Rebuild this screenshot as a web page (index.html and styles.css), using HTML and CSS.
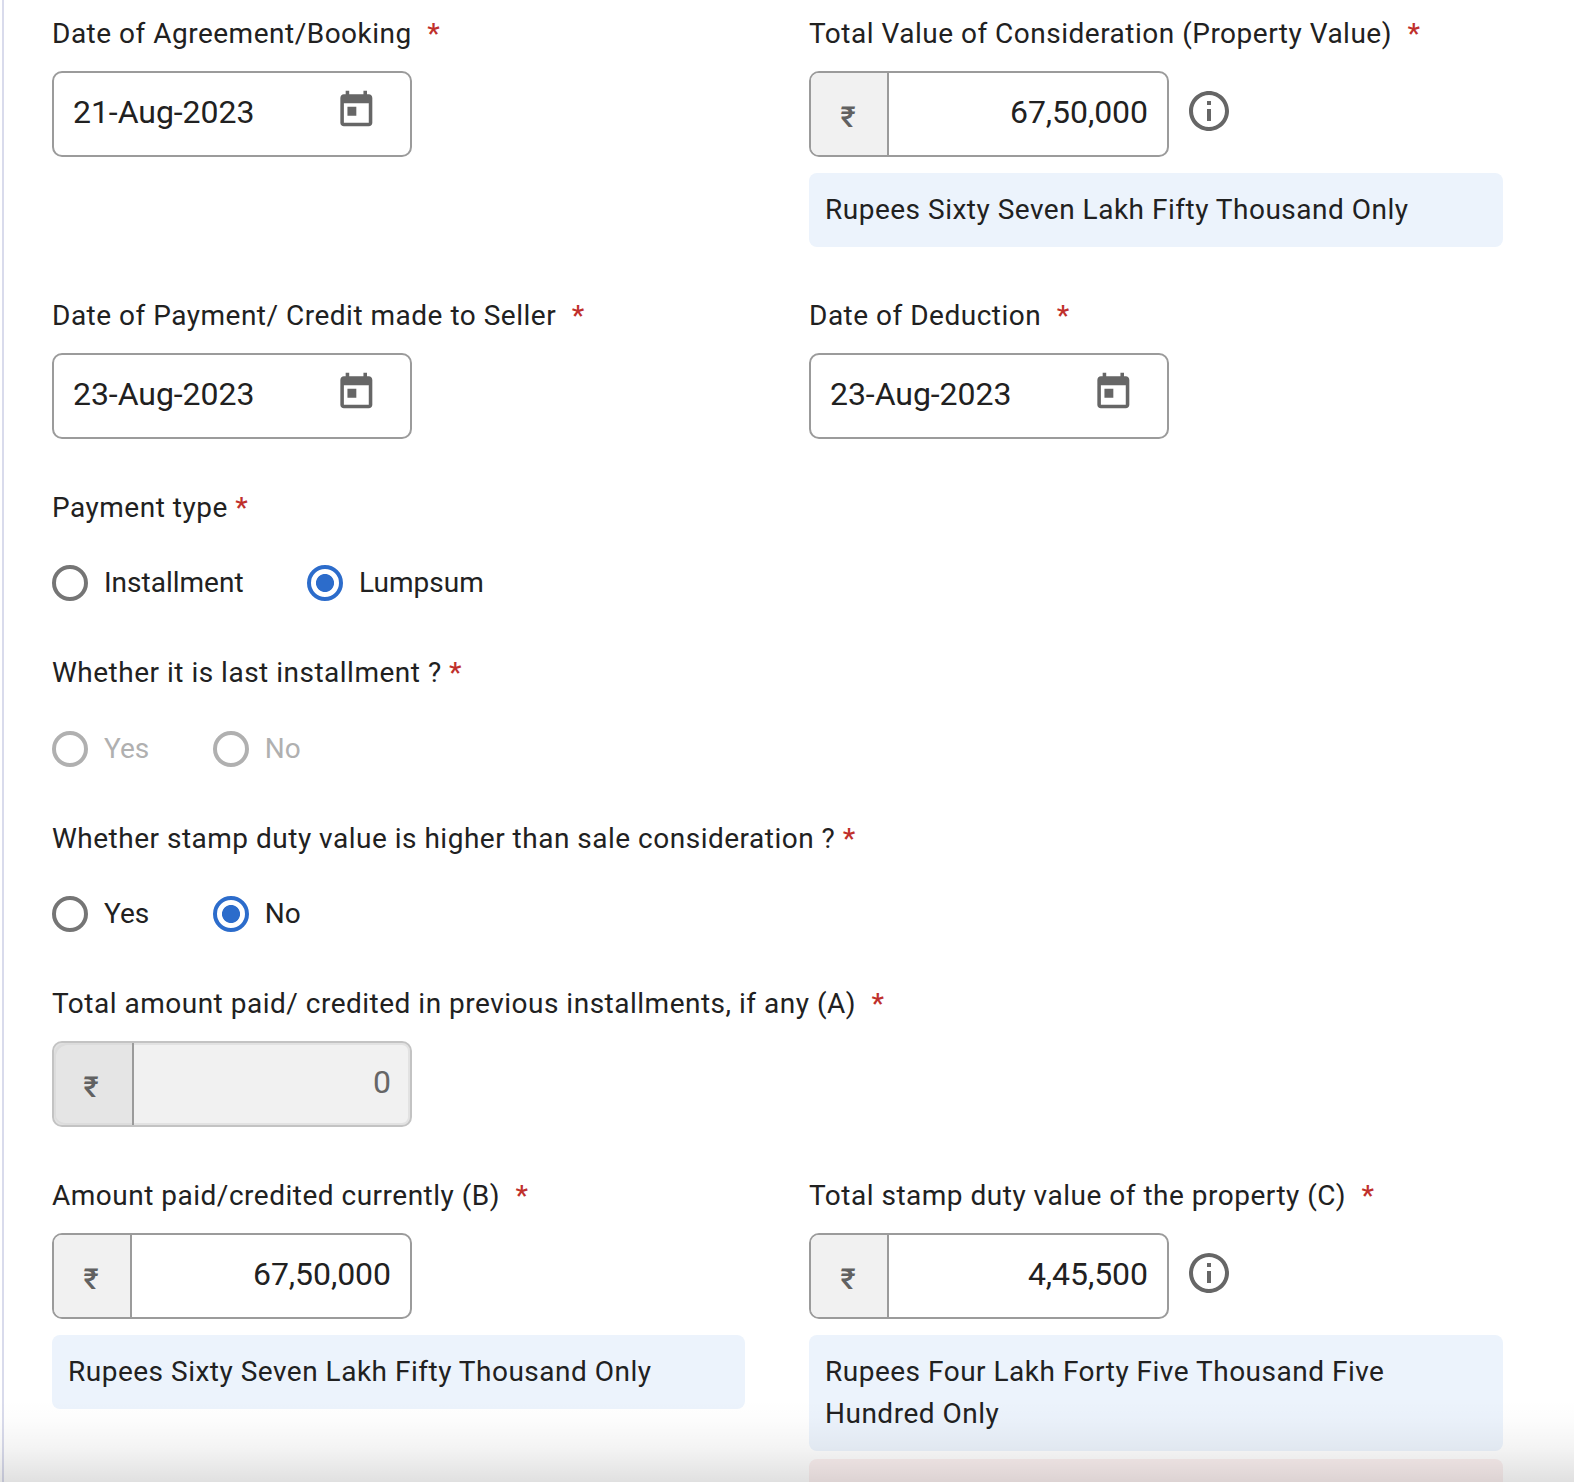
FILE: index.html
```html
<!DOCTYPE html>
<html lang="en">
<head>
<meta charset="utf-8">
<title>Property details</title>
<link rel="stylesheet" href="styles.css">
</head>
<body>
<svg class="sprite" aria-hidden="true">
  <symbol id="calendar" viewBox="0 0 24 24"><path d="M19 3h-1V1h-2v2H8V1H6v2H5c-1.11 0-1.99.9-1.99 2L3 19c0 1.1.89 2 2 2h14c1.1 0 2-.9 2-2V5c0-1.1-.9-2-2-2zm0 16H5V8h14v11zM7 10h5v5H7z"/></symbol>
  <symbol id="info" viewBox="0 0 24 24"><path d="M11 7h2v2h-2zm0 4h2v6h-2zm1-9C6.48 2 2 6.48 2 12s4.48 10 10 10 10-4.48 10-10S17.52 2 12 2zm0 18c-4.41 0-8-3.59-8-8s3.59-8 8-8 8 3.59 8 8-3.59 8-8 8z"/></symbol>
</svg>
<form class="form">
  <div class="row">
    <div class="field">
      <div class="label">Date of Agreement/Booking<span class="req spaced">*</span></div>
      <div class="box date"><span class="value">21-Aug-2023</span><svg class="calendar"><use href="#calendar"/></svg></div>
    </div>
    <div class="field">
      <div class="label">Total Value of Consideration (Property Value)<span class="req spaced">*</span></div>
      <div class="line">
        <div class="box amount"><span class="prefix">₹</span><span class="value">67,50,000</span></div>
        <svg class="info"><use href="#info"/></svg>
      </div>
      <div class="hint">Rupees Sixty Seven Lakh Fifty Thousand Only</div>
    </div>
  </div>
  <div class="row">
    <div class="field">
      <div class="label">Date of Payment/ Credit made to Seller<span class="req spaced">*</span></div>
      <div class="box date"><span class="value">23-Aug-2023</span><svg class="calendar"><use href="#calendar"/></svg></div>
    </div>
    <div class="field">
      <div class="label">Date of Deduction<span class="req spaced">*</span></div>
      <div class="box date"><span class="value">23-Aug-2023</span><svg class="calendar"><use href="#calendar"/></svg></div>
    </div>
  </div>
  <div class="choice">
    <div class="label">Payment type <span class="req">*</span></div>
    <div class="options">
      <label class="option"><span class="radio"></span>Installment</label>
      <label class="option"><span class="radio checked"></span>Lumpsum</label>
    </div>
  </div>
  <div class="choice">
    <div class="label">Whether it is last installment ? <span class="req">*</span></div>
    <div class="options disabled">
      <label class="option"><span class="radio"></span>Yes</label>
      <label class="option"><span class="radio"></span>No</label>
    </div>
  </div>
  <div class="choice">
    <div class="label">Whether stamp duty value is higher than sale consideration ? <span class="req">*</span></div>
    <div class="options">
      <label class="option"><span class="radio"></span>Yes</label>
      <label class="option"><span class="radio checked"></span>No</label>
    </div>
  </div>
  <div class="field">
    <div class="label">Total amount paid/ credited in previous installments, if any (A)<span class="req spaced">*</span></div>
    <div class="box amount readonly"><span class="prefix">₹</span><span class="value">0</span></div>
  </div>
  <div class="row">
    <div class="field">
      <div class="label">Amount paid/credited currently (B)<span class="req spaced">*</span></div>
      <div class="box amount"><span class="prefix">₹</span><span class="value">67,50,000</span></div>
      <div class="hint">Rupees Sixty Seven Lakh Fifty Thousand Only</div>
    </div>
    <div class="field">
      <div class="label">Total stamp duty value of the property (C)<span class="req spaced">*</span></div>
      <div class="line">
        <div class="box amount"><span class="prefix">₹</span><span class="value">4,45,500</span></div>
        <svg class="info"><use href="#info"/></svg>
      </div>
      <div class="hint">Rupees Four Lakh Forty Five Thousand Five Hundred Only</div>
      <div class="alert"></div>
    </div>
  </div>
</form>
<div class="fade"></div>
</body>
</html>
```

FILE: styles.css
```css
* { box-sizing: border-box; }

body {
  margin: 0;
  height: 1482px;
  overflow: hidden;
  background: #fff;
  color: #212121;
  font: 28px/42px Roboto, "Liberation Sans", sans-serif;
  letter-spacing: 0.5px;
}

.sprite { display: none; }

.form {
  display: flex;
  flex-direction: column;
  gap: 48px;
  height: 1482px;
  margin-left: 2px;
  padding: 13px 71px 0 48px;
  border-left: 2px solid #d9dbec;
  overflow: hidden;
}

.form > * { flex-shrink: 0; }

.row {
  display: grid;
  grid-template-columns: 693px 694px;
  column-gap: 64px;
}

.label { margin-bottom: 16px; white-space: nowrap; }

.req { color: #c0302c; font-weight: 500; }
.req.spaced { margin-left: 15.5px; }

.line { display: flex; gap: 16.4px; }

.box {
  display: flex;
  width: 360px;
  height: 86px;
  border: 2px solid #9b9b9b;
  border-radius: 10px;
  overflow: hidden;
}

.value {
  flex: 1;
  padding: 17px 19px 0;
  font-size: 32px;
  line-height: 44px;
  letter-spacing: -0.05px;
}

.calendar {
  width: 42.67px;
  height: 42.67px;
  margin: 16px 32.8px 0 0;
  fill: #666;
}

.amount .value { text-align: right; }

.prefix {
  width: 78px;
  padding: 23px 2px 0 0;
  border-right: 2px solid #9b9b9b;
  background: #f1f1f1;
  color: #616161;
  font-size: 29px;
  font-weight: 500;
  text-align: center;
  letter-spacing: 0;
}

.readonly {
  border-color: #c3c3c3;
  background: #f1f1f1;
  box-shadow: inset 0 0 0 2px #e2e2e2;
}
.readonly .value { color: #666; }
.readonly .prefix {
  width: 80px;
  padding-right: 4px;
  border-radius: 12px 0 0 12px;
  background: #e5e5e5;
  box-shadow: inset 2px 2px #dcdcdc, inset 0 -2px #dcdcdc;
}

.info {
  width: 48px;
  height: 48px;
  margin-top: 16px;
  fill: #666;
}

.hint {
  margin-top: 16px;
  padding: 16px;
  border-radius: 8px;
  background: #ecf3fc;
}

.alert {
  height: 74px;
  margin-top: 8px;
  border-radius: 8px;
  background: #fbf0f0;
}

.choice { height: 117.33px; }
.choice .label { margin-bottom: 36.3px; }

.options { display: flex; gap: 63.5px; height: 36px; letter-spacing: 0; }
.option { display: flex; align-items: center; gap: 16px; }

.radio {
  display: flex;
  width: 36px;
  height: 36px;
  border: 4px solid #757575;
  border-radius: 50%;
}
.radio.checked {
  border-color: #2c6ccb;
  background: radial-gradient(circle, #2c6ccb 8.6px, transparent 9.4px);
}
.disabled { color: #b0b0b0; }
.disabled .radio { border-color: #b0b0b0; }

/* Shade that lies over the lower edge of the scrolling form */
.fade {
  position: absolute;
  left: 0;
  right: 0;
  bottom: 0;
  height: 82px;
  background: linear-gradient(rgba(0,0,0,0), rgba(0,0,0,0.01) 25%, rgba(0,0,0,0.045) 57%, rgba(0,0,0,0.08) 78%, rgba(0,0,0,0.12));
}
```
